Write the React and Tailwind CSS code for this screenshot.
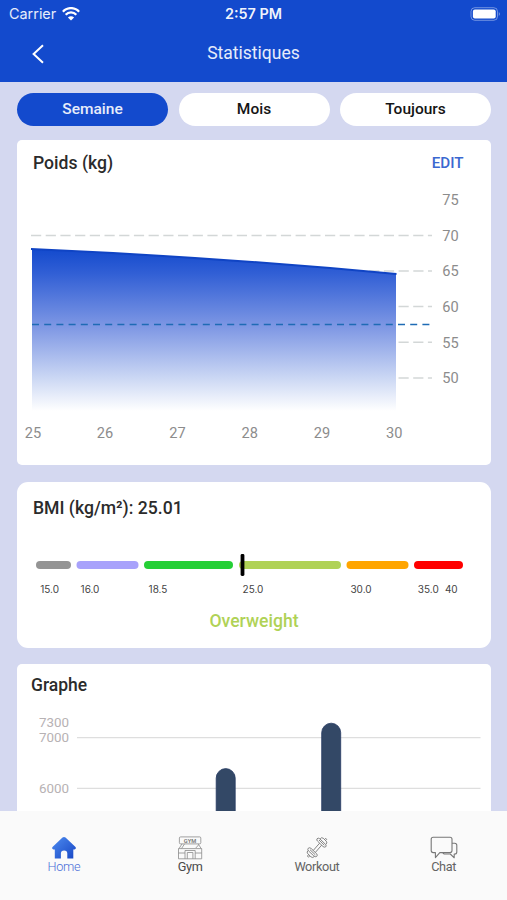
import { useState } from "react";

const periods = ["Semaine", "Mois", "Toujours"];

const weightTicks = [
  { label: "75", y: 200 },
  { label: "70", y: 235.5, from: 31 },
  { label: "65", y: 271, from: 369.2 },
  { label: "60", y: 306.5, from: 398.5 },
  { label: "55", y: 342.3, from: 398.5 },
  { label: "50", y: 378, from: 398.5 },
];

const days = [
  { label: "25", x: 33 },
  { label: "26", x: 105 },
  { label: "27", x: 177.5 },
  { label: "28", x: 249.7 },
  { label: "29", x: 322 },
  { label: "30", x: 394.3 },
];

const bmiRanges = [
  { from: 36, to: 71, color: "#949494" },
  { from: 76.5, to: 138.5, color: "#a8a2fb" },
  { from: 144, to: 233, color: "#25cf36" },
  { from: 239, to: 341, color: "#b0d256" },
  { from: 346.5, to: 408.5, color: "#ffa500" },
  { from: 414, to: 463, color: "#ff0000" },
];

const bmiLabels = [
  { label: "15.0", x: 49.6 },
  { label: "16.0", x: 90 },
  { label: "18.5", x: 158 },
  { label: "25.0", x: 253 },
  { label: "30.0", x: 361 },
  { label: "35.0", x: 428.3 },
  { label: "40", x: 451.3 },
];

function StatusBar() {
  return (
    <div className="grid h-[27px] grid-cols-3 items-center pt-px font-['Inter',sans-serif] text-white">
      <div className="flex items-center gap-[6px] pl-[9px]">
        <span className="text-[14.4px] text-white/90">Carrier</span>
        <svg width="18" height="14" viewBox="0 0 18 14" fill="none" stroke="white" strokeWidth="2.3">
          <path d="M0.9 4.7 C5.3 -0.1 12.7 -0.1 17.1 4.7" />
          <path d="M3.7 7.7 C6.6 4.7 11.4 4.7 14.3 7.7" />
          <path d="M9 13.5 L5.9 10.4 C7.6 8.7 10.4 8.7 12.1 10.4 Z" fill="white" stroke="none" />
        </svg>
      </div>
      <span className="text-center text-[14.4px] font-semibold text-white/95">2:57 PM</span>
      <div className="flex justify-end pr-[6px]">
        <svg width="31" height="14" viewBox="0 0 31 14">
          <rect x="1" y="0.7" width="26.5" height="12.6" rx="3.8" fill="none" stroke="white" strokeOpacity="0.4" />
          <rect x="2.9" y="2.5" width="22.8" height="9" rx="2" fill="white" />
          <path d="M28.8 5 Q31 7 28.8 9 Z" fill="white" fillOpacity="0.45" />
        </svg>
      </div>
    </div>
  );
}

function Header() {
  return (
    <div className="grid h-[53px] grid-cols-[60px_1fr_60px] items-center">
      <button type="button" className="flex justify-center pl-[15px]">
        <svg width="14" height="20" viewBox="0 0 14 20" fill="none" stroke="white" strokeWidth="2">
          <path d="M12 1.2 L2.6 10 L12 18.8" />
        </svg>
      </button>
      <h1 className="text-center text-[17.5px] text-white/90">Statistiques</h1>
    </div>
  );
}

function WeightChart() {
  return (
    <svg className="block" width="474" height="275" viewBox="17 190 474 275">
      <defs>
        <linearGradient id="weightFill" x1="0" y1="249" x2="0" y2="411" gradientUnits="userSpaceOnUse">
          <stop offset="0" stopColor="#134acd" />
          <stop offset="0.15" stopColor="#315fd5" />
          <stop offset="0.5" stopColor="#839be5" />
          <stop offset="0.8" stopColor="#ccd8f4" />
          <stop offset="1" stopColor="#ffffff" />
        </linearGradient>
      </defs>
      {weightTicks
        .filter((tick) => tick.from)
        .map((tick) => (
          <line
            key={tick.label}
            x1={tick.from}
            x2="432"
            y1={tick.y}
            y2={tick.y}
            stroke="#d3d7d7"
            strokeWidth="1.6"
            strokeDasharray="10.2 4.5"
          />
        ))}
      <path d="M32 249 Q214 257 396 274 V411 H32 Z" fill="url(#weightFill)" />
      <path d="M31 249 Q214 257 396.5 274" fill="none" stroke="#1044c4" strokeWidth="2" />
      <line x1="32" x2="432" y1="324.5" y2="324.5" stroke="#1f6bb5" strokeWidth="1.5" strokeDasharray="7 5.2" />
      <g fill="#8c8c8c" fontSize="14.6" textAnchor="middle">
        {weightTicks.map((tick) => (
          <text key={tick.label} x="450.5" y={tick.y + 5.3}>
            {tick.label}
          </text>
        ))}
        {days.map((day) => (
          <text key={day.label} x={day.x} y="437.7">
            {day.label}
          </text>
        ))}
      </g>
    </svg>
  );
}

function BmiScale() {
  return (
    <svg className="block" width="474" height="50" viewBox="17 550 474 50">
      {bmiRanges.map((range) => (
        <rect key={range.from} x={range.from} y="561" width={range.to - range.from} height="8" rx="4" fill={range.color} />
      ))}
      <rect x="240.6" y="554" width="3.8" height="22" rx="1.4" fill="#000" />
      <g fill="#444" fontSize="10" fontFamily="Inter, sans-serif" textAnchor="middle">
        {bmiLabels.map((item) => (
          <text key={item.label} x={item.x} y="593.2">
            {item.label}
          </text>
        ))}
      </g>
    </svg>
  );
}

function StepsChart() {
  return (
    <svg className="block" width="474" height="111" viewBox="17 700 474 111">
      <g stroke="#dedede" strokeWidth="1.3">
        <line x1="77" x2="480.5" y1="737.7" y2="737.7" />
        <line x1="77" x2="480.5" y1="788.4" y2="788.4" />
      </g>
      <g fill="#334866" stroke="#263a62" strokeWidth="0.8">
        <rect x="216.2" y="768.6" width="19" height="70" rx="9.5" />
        <rect x="321.7" y="723.2" width="19" height="110" rx="9.5" />
      </g>
      <g fill="#b7b2b4" fontSize="13.4" textAnchor="end">
        <text x="69" y="727">7300</text>
        <text x="69" y="742.2">7000</text>
        <text x="69" y="793">6000</text>
      </g>
    </svg>
  );
}

function HomeIcon() {
  return (
    <svg width="26" height="24" viewBox="0 0 26 24">
      <defs>
        <linearGradient id="homeFill" x1="0" y1="0" x2="1" y2="1">
          <stop offset="0" stopColor="#4e8cf0" />
          <stop offset="1" stopColor="#1746c4" />
        </linearGradient>
      </defs>
      <path
        d="M11.5 1.5 Q13 0.4 14.5 1.5 L24.5 11 Q25.6 12.9 23.5 13.4 H22.3 V22.6 H16.3 V17.5 Q16.3 14.4 13.1 14.4 Q9.9 14.4 9.9 17.5 V22.6 H3.8 V13.4 H2.5 Q0.4 12.9 1.5 11 Z"
        fill="url(#homeFill)"
      />
    </svg>
  );
}

function GymIcon() {
  return (
    <svg width="26" height="24" viewBox="0 0 26 24" fill="none" stroke="#8a8a8a" strokeWidth="0.8">
      <rect x="2.4" y="0.9" width="21.4" height="7" rx="1.2" />
      <text
        x="13.1"
        y="6.5"
        textAnchor="middle"
        textLength="12.5"
        lengthAdjust="spacingAndGlyphs"
        fontSize="5.4"
        fontWeight="600"
        fill="#777"
        stroke="none"
      >
        GYM
      </text>
      <path d="M5 7.9 L2 12.6 M24.2 12.6 L21.2 7.9 M7.5 8 L4.6 12.4 M21.5 9 L18.8 12" />
      <path d="M1.5 12.6 H24.7 V22.8 H1.5 Z M1.5 17 H8 M18.2 17 H24.7" />
      <path d="M8 22.8 V14.5 H18.2 V22.8 M10.3 22.8 V16.5 H15.9 V22.8" />
    </svg>
  );
}

function DumbbellIcon() {
  return (
    <svg width="24" height="24" viewBox="0 0 24 24" fill="none" stroke="#777" strokeWidth="0.9" strokeLinejoin="round">
      <path d="M8.3 14.4 L14.6 7.2 M10.4 16.4 L16.7 9.1" />
      <path d="M12 2.8 Q13.2 1.5 14.8 2.8 L20.7 8.5 Q21.8 10 20.5 11 Q19.2 11.5 18 10.5 L12.6 5.2 Q11.2 4 12 2.8 Z" />
      <path d="M15.2 2.8 Q16.2 1 18.2 2.2 L21.3 5.2 Q22.7 7 20.8 8.4 M19.6 3.4 L20.7 2.3 L21.7 3.3 L20.6 4.5 M14 4 L19.3 9.2" />
      <path d="M3.3 12.2 Q4.7 11.1 6.2 12.5 L11.7 17.8 Q12.9 19.3 11.7 20.4 Q10.2 21.3 8.8 19.9 L3.5 14.9 Q2.2 13.6 3.3 12.2 Z" />
      <path d="M3 14.6 Q1.3 16 2.8 17.8 L5.9 20.8 Q7.8 22.4 9.3 20.5 M3.6 18.8 L2.4 20 L3.5 21.2 L4.8 20 M5 13.7 L10.3 18.8" />
    </svg>
  );
}

function ChatIcon() {
  return (
    <svg width="28" height="24" viewBox="0 0 28 24" fill="none" stroke="#777" strokeWidth="1.1" strokeLinejoin="round">
      <path d="M3.2 1.2 H20 Q22 1.2 22 3.2 V14.6 Q22 16.6 20 16.6 H9.8 L5.4 21.6 V16.6 H3.2 Q1.2 16.6 1.2 14.6 V3.2 Q1.2 1.2 3.2 1.2 Z" />
      <path d="M22 7.2 H24.7 Q26.8 7.2 26.8 9.3 V16 Q26.8 18 24.9 18 H24.2 V21.8 L20.3 18 H14.2 L12.8 16.8" />
    </svg>
  );
}

const navItems = [
  { label: "Home", Icon: HomeIcon, style: "pl-px font-light text-[#4a6ed8]" },
  { label: "Gym", Icon: GymIcon, style: "text-[#4a4a4a]" },
  { label: "Workout", Icon: DumbbellIcon, style: "text-[#636363]" },
  { label: "Chat", Icon: ChatIcon, style: "text-[#636363]" },
];

export default function App() {
  const [period, setPeriod] = useState("Semaine");

  return (
    <div className="flex h-[900px] w-[507px] flex-col overflow-hidden bg-[#d4d8f0] font-['Roboto',sans-serif] text-[#2b2b2b]">
      <header className="h-[82px] shrink-0 bg-[#134acd]">
        <StatusBar />
        <Header />
      </header>

      <main className="min-h-0 flex-1 overflow-hidden pt-[11px] pr-4 pl-[17px]">
        {/* Period switch */}
        <div className="grid h-[33px] grid-cols-3 gap-[10.5px]">
          {periods.map((name) => (
            <button
              key={name}
              type="button"
              onClick={() => setPeriod(name)}
              className={`rounded-full pt-px text-[15.5px] font-medium ${
                period === name ? "bg-[#134acd] text-white/90" : "bg-white text-[#151515]"
              }`}
            >
              {name}
            </button>
          ))}
        </div>

        {/* Weight */}
        <section className="mt-[13.5px] h-[325.5px] rounded-[5px] bg-white">
          <div className="flex h-[50.5px] items-start justify-between pt-[10.5px] pr-[27.5px] pl-4">
            <h2 className="text-[17.6px] leading-[26px] font-medium">Poids (kg)</h2>
            <button type="button" className="text-[15.2px] leading-[27px] font-medium text-[#3b68d0]">
              EDIT
            </button>
          </div>
          <WeightChart />
        </section>

        {/* BMI */}
        <section className="mt-[17px] h-[166px] rounded-[11px] bg-white">
          <div className="h-[68px] pt-[13px] pl-4">
            <h2 className="text-[17.6px] leading-[26px] font-medium">BMI (kg/m²): 25.01</h2>
          </div>
          <BmiScale />
          <p className="pt-[8px] text-center text-[17.6px] leading-[26px] font-medium text-[#b0d256]">Overweight</p>
        </section>

        {/* Graph */}
        <section className="mt-4 rounded-t-[5px] bg-white">
          <div className="h-9 pt-2 pl-[14px]">
            <h2 className="text-[17.5px] leading-[26px] font-medium">Graphe</h2>
          </div>
          <StepsChart />
        </section>
      </main>

      <nav className="grid h-[89px] shrink-0 grid-cols-4 bg-[#fafafa] pt-[25px]">
        {navItems.map(({ label, Icon, style }) => (
          <button key={label} type="button" className={`flex flex-col items-center ${style}`}>
            <Icon />
            <span className="text-[12.7px] leading-[14px] tracking-[-0.35px]">{label}</span>
          </button>
        ))}
      </nav>
    </div>
  );
}
